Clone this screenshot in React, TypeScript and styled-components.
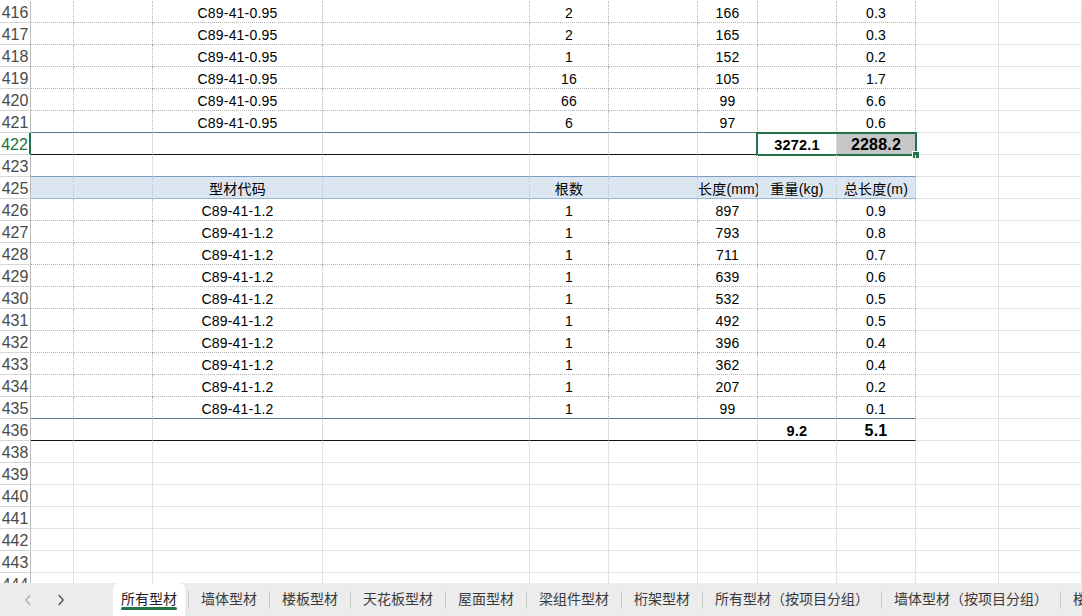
import React from 'react';
import styled, { createGlobalStyle, css } from 'styled-components';

const GlobalStyle = createGlobalStyle`
  html, body {
    margin: 0;
    padding: 0;
    overflow: hidden;
    background: #fff;
  }
  body {
    font-family: "Liberation Sans", "Noto Sans CJK SC", sans-serif;
    color: #000;
  }
`;

// column widths: row header, A..K, then the rest of the window
const COLS = '31px 43px 79px 170px 207px 79px 89px 60px 79px 79px 83px 1fr';

type Kind = 'plain' | 'data' | 'head' | 'sum';
type Under = 'grid' | 'dot' | 'rule' | 'headTop' | 'headBottom' | 'black';

type RowData = {
  n: number;
  kind: Kind;
  under: Under;
  cells: Record<number, string>;
  active?: boolean;
};

const vLine: Record<Kind, string> = {
  plain: '1px solid #e1e1e1',
  data: '1px dotted #b3b3b3',
  head: '1px dotted #b7c7db',
  sum: '1px solid #dadada',
};

const hLine: Record<Under, string> = {
  grid: '1px solid #e1e1e1',
  dot: '1px dotted #b3b3b3',
  rule: '1px solid #56778f',
  headTop: '1px solid #7c9cc0',
  headBottom: '1px solid #9ab6d8',
  black: '1px solid #111',
};

const Page = styled.div`
  height: 100vh;
  display: flex;
  flex-direction: column;
`;

const Sheet = styled.div`
  flex: 1;
  overflow: hidden;
  padding-top: 1px;
  border-top: 1px dotted #b3b3b3;
  margin-top: -1px;
`;

const Row = styled.div`
  position: relative;
  display: grid;
  grid-template-columns: ${COLS};
  height: 22px;
`;

const RowNum = styled.div<{ $active?: boolean }>`
  box-sizing: border-box;
  border-bottom: 1px solid #d6d6d6;
  border-right: 1px solid #bdbdbd;
  font-size: 16px;
  line-height: 16px;
  padding-top: 4px;
  text-align: center;
  color: #4a4a4a;
  background: #fff;
  ${p =>
    p.$active &&
    css`
      color: #217346;
      border-right: 2px solid #217346;
    `}
`;

const Cell = styled.div<{ $v: string; $h: string; $fill?: string; $size?: number; $bold?: boolean }>`
  box-sizing: border-box;
  border-right: ${p => p.$v};
  border-bottom: ${p => p.$h};
  background: ${p => p.$fill || 'transparent'};
  font-size: ${p => p.$size || 14}px;
  font-weight: ${p => (p.$bold ? 700 : 400)};
  letter-spacing: 0.2px;
  line-height: 16px;
  padding-top: 4px;
  text-align: center;
  white-space: nowrap;
  overflow: visible;
`;

// green range outline around the selected totals
const Selection = styled.div`
  position: absolute;
  left: 756px;
  top: -1px;
  width: 161px;
  height: 24px;
  box-sizing: border-box;
  border: 2px solid #217346;
  pointer-events: none;
`;

const Handle = styled.span`
  position: absolute;
  right: -5px;
  bottom: -5px;
  width: 6px;
  height: 6px;
  background: #217346;
  border: 1px solid #fff;
`;

const TabBar = styled.div`
  height: 33px;
  flex: none;
  display: flex;
  background: #ececec;
  overflow: hidden;
`;

const Nav = styled.div`
  width: 113px;
  flex: none;
  display: flex;
  align-items: center;
  padding-left: 16px;
  gap: 9px;
  box-sizing: border-box;
`;

const NavButton = styled.button<{ $off?: boolean }>`
  width: 24px;
  height: 24px;
  border: 0;
  padding: 0;
  background: none;
  display: flex;
  align-items: center;
  justify-content: center;
  color: ${p => (p.$off ? '#a8a8a8' : '#444')};
`;

const TabList = styled.div`
  display: flex;
  align-items: stretch;
  white-space: nowrap;
`;

const Tab = styled.div<{ $active?: boolean }>`
  font-family: "Noto Sans CJK SC", "Liberation Sans", sans-serif;
  font-size: 14px;
  line-height: 18px;
  padding: 6px 12px 0;
  color: #3a3a3a;
  display: flex;
  flex-direction: column;
  align-items: center;
  ${p =>
    p.$active &&
    css`
      padding: 6px 8px 0;
      margin-right: 3px;
      background: #fff;
      border-radius: 6px 6px 0 0;
      color: #222;
      &::after {
        content: '';
        width: 100%;
        height: 3px;
        margin-top: 0;
        border-radius: 2px;
        background: #217346;
      }
    `}
`;

const Sep = styled.span`
  width: 1px;
  height: 18px;
  align-self: center;
  background: #c8c8c8;
  flex: none;
`;

const Chevron = ({ dir }: { dir: 'left' | 'right' }) => (
  <svg width="8" height="12" viewBox="0 0 8 12" fill="none">
    <polyline
      points={dir === 'left' ? '6,1.5 1.8,6 6,10.5' : '2,1.5 6.2,6 2,10.5'}
      stroke="currentColor"
      strokeWidth="1.2"
      strokeLinejoin="round"
      strokeLinecap="round"
    />
  </svg>
);

const upper: [number, number, string, string][] = [
  [416, 2, '166', '0.3'],
  [417, 2, '165', '0.3'],
  [418, 1, '152', '0.2'],
  [419, 16, '105', '1.7'],
  [420, 66, '99', '6.6'],
  [421, 6, '97', '0.6'],
];

const lower: [string, string][] = [
  ['897', '0.9'],
  ['793', '0.8'],
  ['711', '0.7'],
  ['639', '0.6'],
  ['532', '0.5'],
  ['492', '0.5'],
  ['396', '0.4'],
  ['362', '0.4'],
  ['207', '0.2'],
  ['99', '0.1'],
];

const rows: RowData[] = [
  ...upper.map(([n, count, len, total], i) => ({
    n,
    kind: 'data' as Kind,
    under: (i === upper.length - 1 ? 'rule' : 'dot') as Under,
    cells: { 3: 'C89-41-0.95', 5: String(count), 7: len, 9: total },
  })),
  { n: 422, kind: 'sum', under: 'black', cells: { 8: '3272.1', 9: '2288.2' }, active: true },
  { n: 423, kind: 'plain', under: 'headTop', cells: {} },
  {
    n: 425,
    kind: 'head',
    under: 'headBottom',
    cells: { 3: '型材代码', 5: '根数', 7: '长度(mm)', 8: '重量(kg)', 9: '总长度(m)' },
  },
  ...lower.map(([len, total], i) => ({
    n: 426 + i,
    kind: 'data' as Kind,
    under: (i === lower.length - 1 ? 'rule' : 'dot') as Under,
    cells: { 3: 'C89-41-1.2', 5: '1', 7: len, 9: total },
  })),
  { n: 436, kind: 'sum', under: 'black', cells: { 8: '9.2', 9: '5.1' } },
  ...[438, 439, 440, 441, 442, 443, 444].map(n => ({
    n,
    kind: 'plain' as Kind,
    under: 'grid' as Under,
    cells: {},
  })),
];

const tabs = [
  '所有型材',
  '墙体型材',
  '楼板型材',
  '天花板型材',
  '屋面型材',
  '梁组件型材',
  '桁架型材',
  '所有型材（按项目分组）',
  '墙体型材（按项目分组）',
  '楼板型材（按项目分组）',
];

const SheetRow = ({ row }: { row: RowData }) => (
  <Row>
    <RowNum $active={row.active}>{row.n}</RowNum>
    {Array.from({ length: 11 }, (_, i) => {
      const col = i + 1;
      const inTable = col <= 9;
      const v = inTable ? vLine[row.kind] : vLine.plain;
      const h = inTable ? hLine[row.under] : hLine.grid;
      const sum = row.kind === 'sum';
      return (
        <Cell
          key={col}
          $v={v}
          $h={h}
          $fill={
            row.kind === 'head' && inTable
              ? '#dce6f1'
              : row.active && col === 9
              ? '#c6c6c6'
              : undefined
          }
          $bold={sum}
          $size={sum ? (col === 9 ? 16 : 14.5) : 14}
        >
          {row.cells[col] ?? ''}
        </Cell>
      );
    })}
    {row.active && (
      <Selection>
        <Handle />
      </Selection>
    )}
  </Row>
);

export default function App() {
  return (
    <Page>
      <GlobalStyle />
      <Sheet>
        {rows.map(r => (
          <SheetRow key={r.n} row={r} />
        ))}
      </Sheet>
      <TabBar>
        <Nav>
          <NavButton $off>
            <Chevron dir="left" />
          </NavButton>
          <NavButton>
            <Chevron dir="right" />
          </NavButton>
        </Nav>
        <TabList>
          {tabs.map((t, i) => (
            <React.Fragment key={t}>
              <Tab $active={i === 0}>{t}</Tab>
              <Sep />
            </React.Fragment>
          ))}
        </TabList>
      </TabBar>
    </Page>
  );
}
